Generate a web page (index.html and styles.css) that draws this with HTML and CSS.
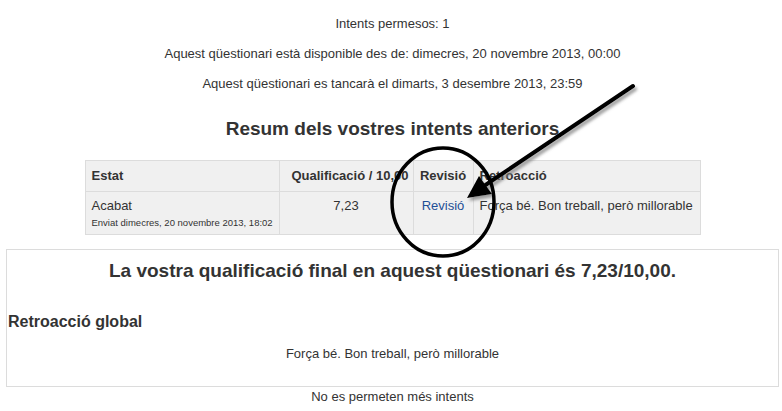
FILE: index.html
```html
<!DOCTYPE html>
<html lang="ca">
<head>
<meta charset="utf-8">
<title>Qüestionari</title>
<link rel="stylesheet" href="styles.css">
</head>
<body>
<main class="page">
  <div class="info">
    <p>Intents permesos: 1</p>
    <p>Aquest qüestionari està disponible des de: dimecres, 20 novembre 2013, 00:00</p>
    <p>Aquest qüestionari es tancarà el dimarts, 3 desembre 2013, 23:59</p>
  </div>
  <h3 class="summary-title">Resum dels vostres intents anteriors</h3>
  <table class="attempts">
    <colgroup>
      <col class="w-state">
      <col class="w-grade">
      <col class="w-review">
      <col class="w-feedback">
    </colgroup>
    <thead>
      <tr>
        <th class="c-state">Estat</th>
        <th class="c-grade">Qualificació / 10,00</th>
        <th class="c-review">Revisió</th>
        <th class="c-feedback">Retroacció</th>
      </tr>
    </thead>
    <tbody>
      <tr>
        <td class="c-state">Acabat<span class="sub">Enviat dimecres, 20 novembre 2013, 18:02</span></td>
        <td class="c-grade">7,23</td>
        <td class="c-review"><a href="#">Revisió</a></td>
        <td class="c-feedback">Força bé. Bon treball, però millorable</td>
      </tr>
    </tbody>
  </table>
  <section class="result-box">
    <h3 class="final-grade">La vostra qualificació final en aquest qüestionari és 7,23/10,00.</h3>
    <h4 class="overall-title">Retroacció global</h4>
    <p class="overall-text">Força bé. Bon treball, però millorable</p>
  </section>
  <p class="no-more">No es permeten més intents</p>
</main>
<svg class="annot" width="782" height="411" viewBox="0 0 782 411" aria-hidden="true">
  <defs>
    <filter id="sh" x="-20%" y="-20%" width="140%" height="140%">
      <feDropShadow dx="2" dy="3" stdDeviation="1.6" flood-color="#777" flood-opacity="0.7"/>
    </filter>
  </defs>
  <g filter="url(#sh)">
    <line x1="633" y1="86" x2="484" y2="186" stroke="#000" stroke-width="4" stroke-linecap="round"/>
    <polygon points="467,198 479,176 492,194" fill="#000"/>
  </g>
  <ellipse cx="443" cy="202" rx="51" ry="54" fill="none" stroke="#000" stroke-width="3.5"/>
</svg>
</body>
</html>
```
FILE: styles.css
```css
html, body {
  margin: 0;
  padding: 0;
  background: #fff;
}
body {
  font-family: "Liberation Sans", Arial, sans-serif;
  font-size: 13px;
  line-height: 20px;
  color: #333;
  position: relative;
  width: 782px;
  height: 411px;
  overflow: hidden;
}
.page {
  padding: 14px 3px 0 6px;
}
.info p {
  margin: 0 0 10px;
  text-align: center;
}
.summary-title {
  margin: 23px 0 19px;
  font-size: 19px;
  line-height: 24px;
  font-weight: bold;
  text-align: center;
}
.attempts {
  margin: 0 auto;
  border-collapse: collapse;
  table-layout: fixed;
  background: #f0f0f0;
  width: 615px;
  white-space: nowrap;
  position: relative;
  left: 0;
}
.w-state { width: 194px; }
.w-grade { width: 134px; }
.w-review { width: 60px; }
.w-feedback { width: 227px; }
.attempts th,
.attempts td {
  border: 1px solid #dcdcdc;
  padding: 5px 6px;
  text-align: left;
  vertical-align: top;
  overflow: visible;
}
.attempts td {
  padding: 4px 6px 4px;
  height: 34px;
}
.attempts th.c-grade { text-align: right; padding-right: 4px; }
.attempts td.c-grade { text-align: center; }
.attempts .c-review { text-align: center; padding-left: 4px; padding-right: 4px; }
.attempts .sub {
  display: block;
  font-size: 9.5px;
  line-height: 14px;
}
.attempts a {
  color: #1f4f96;
  text-decoration: none;
}
.result-box {
  margin-top: 14px;
  border: 1px solid #dcdcdc;
  height: 136px;
}
.final-grade {
  margin: 9px 0 0;
  font-size: 19px;
  line-height: 24px;
  text-align: center;
}
.overall-title {
  margin: 28px 0 0;
  font-size: 16px;
  line-height: 22px;
  padding-left: 1px;
}
.overall-text {
  margin: 11px 0 0;
  text-align: center;
}
.no-more {
  margin: 0;
  text-align: center;
}
.annot {
  position: absolute;
  left: 0;
  top: 0;
  pointer-events: none;
}
```
